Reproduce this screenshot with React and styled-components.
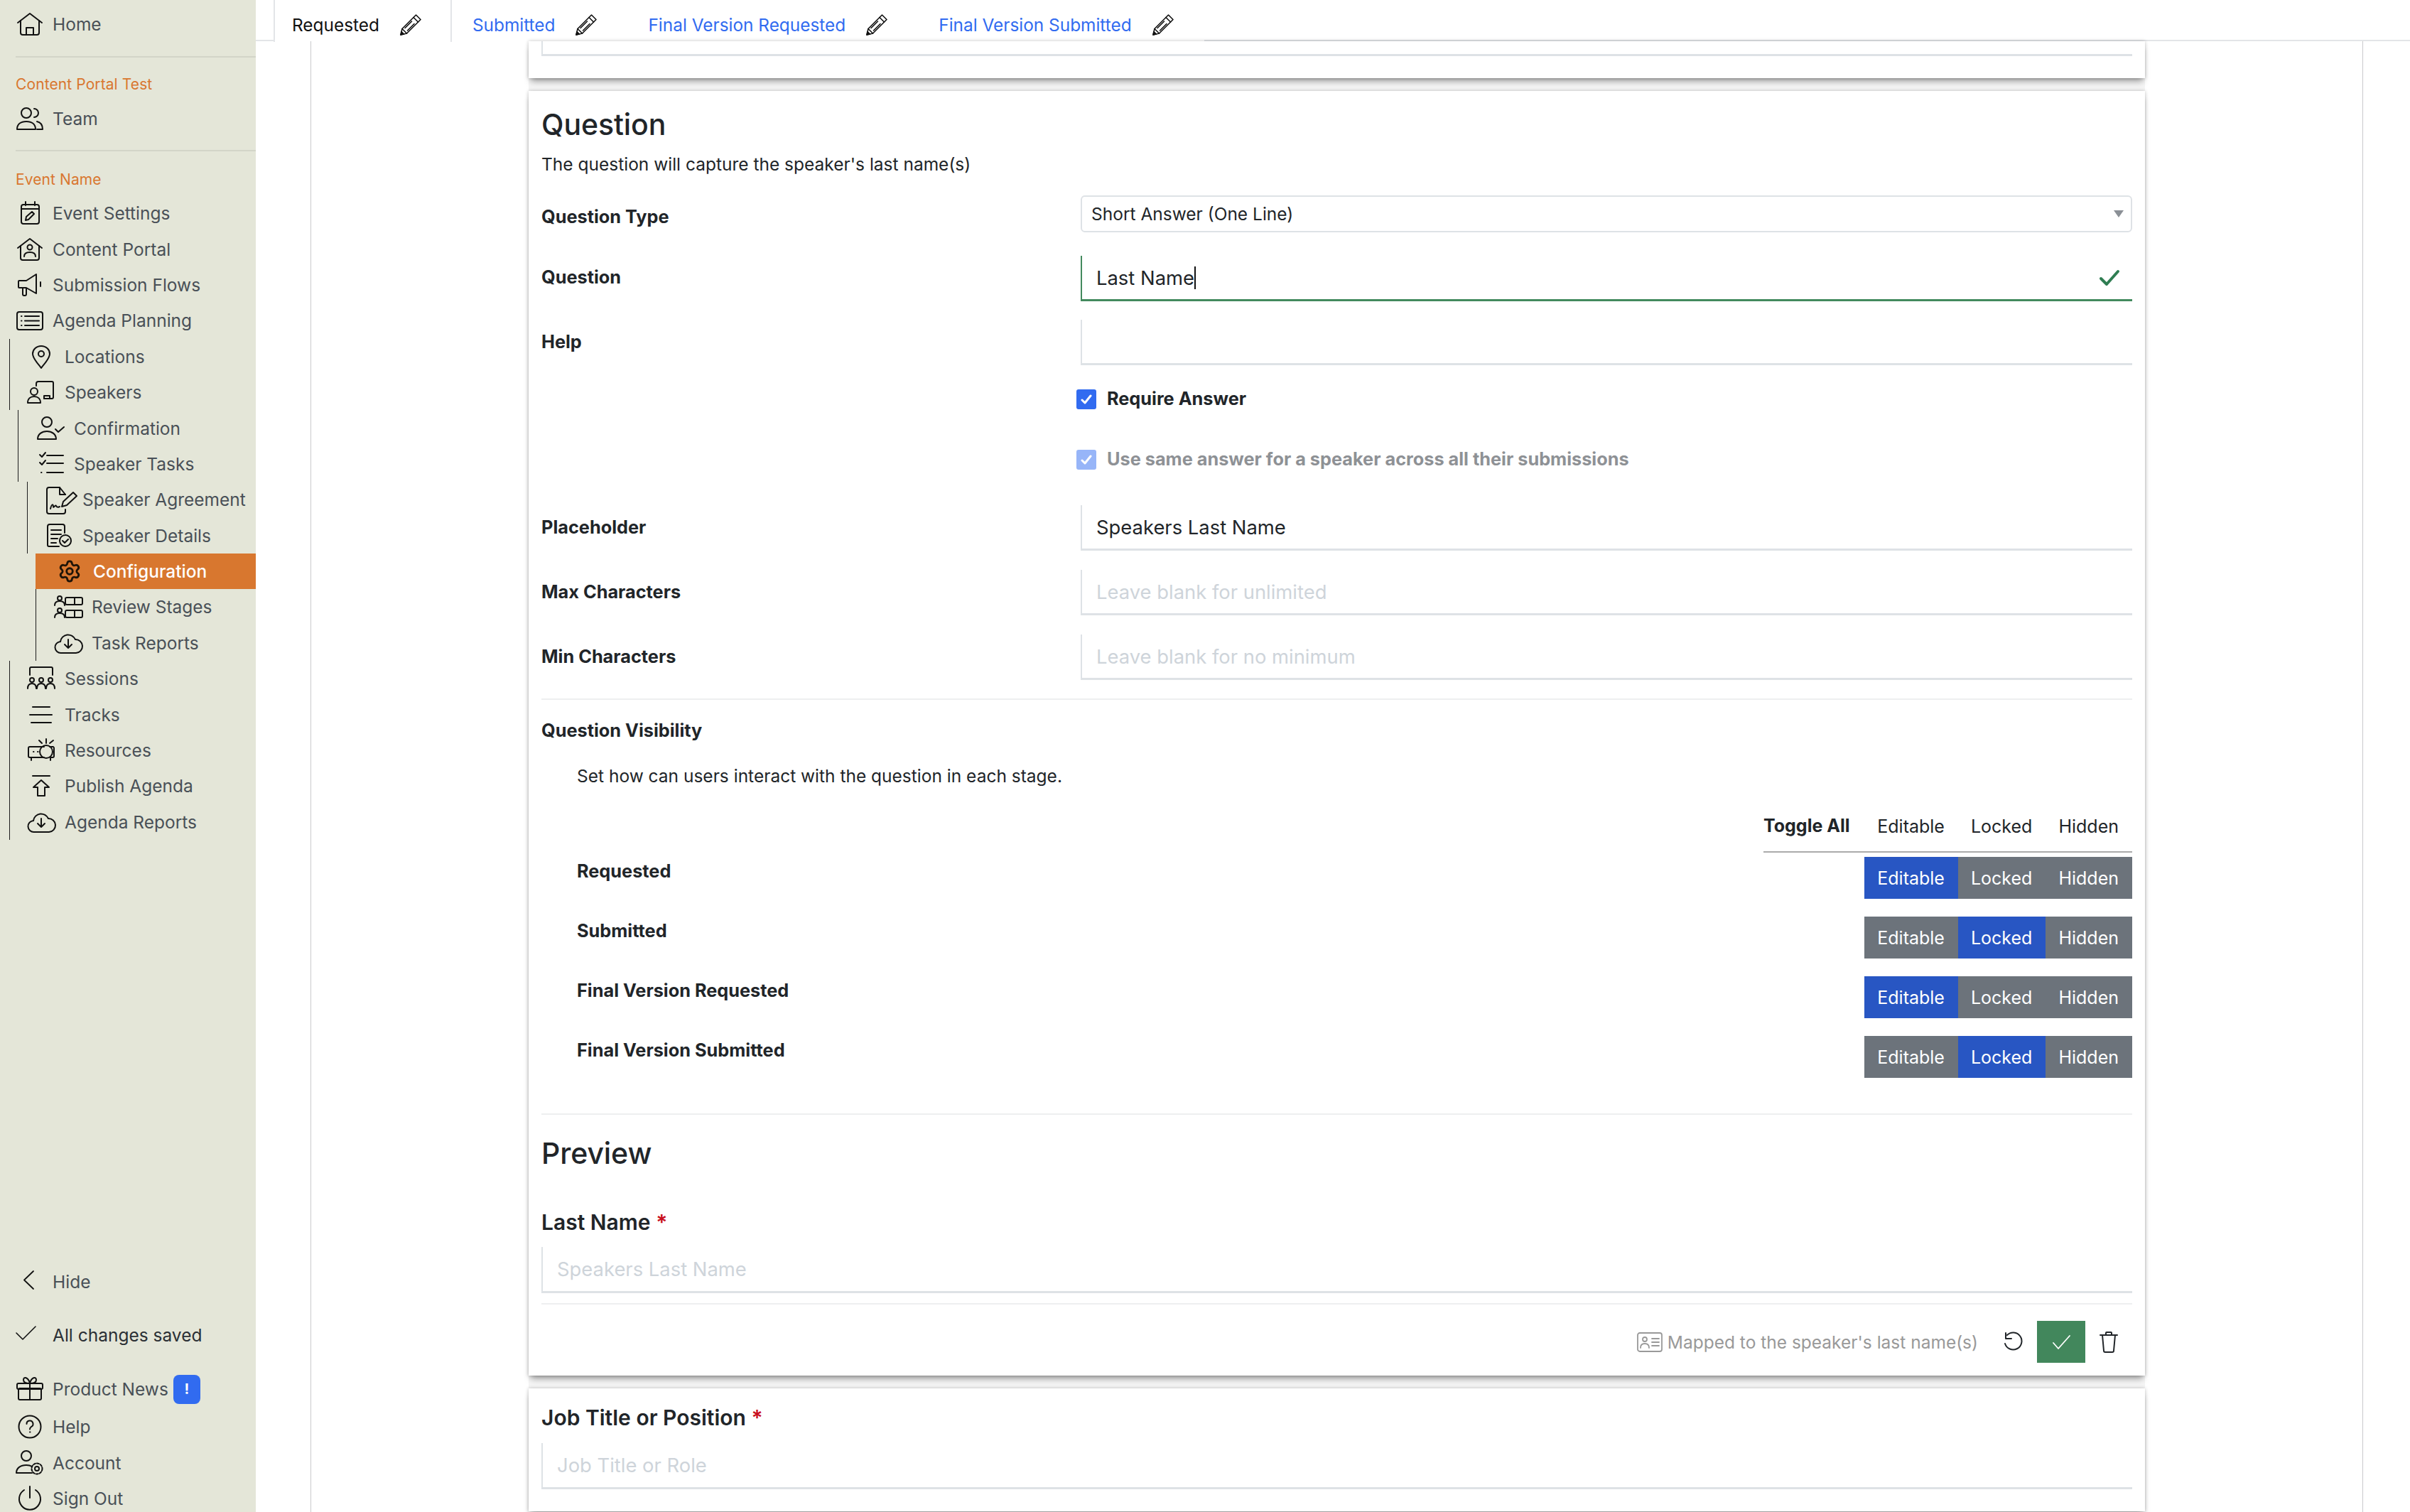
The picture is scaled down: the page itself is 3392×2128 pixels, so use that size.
import React from "react";
import styled, { createGlobalStyle } from "styled-components";
import { Settings } from "lucide-react";

const GlobalStyle = createGlobalStyle`
  * { box-sizing: border-box; }
  html, body { margin: 0; padding: 0; background: #fff; }
  body { font-family: Inter, "Liberation Sans", sans-serif; color: #212529; }
`;

const Page = styled.div`
  display: flex;
  width: 3392px;
  height: 2128px;
  overflow: hidden;
`;

/* sidebar */
const Sidebar = styled.aside`
  width: 360px;
  flex: none;
  background: #e4e6d8;
  display: flex;
  flex-direction: column;
  justify-content: space-between;
  padding-top: 9px;
`;

const Divider = styled.div`
  height: 2px;
  margin: ${(p) => p.$m};
  background: #d3d5c8;
`;

const SectionLabel = styled.div`
  font-size: 21px;
  line-height: 26px;
  color: #d9772f;
  padding-left: 22px;
  margin-bottom: ${(p) => p.$mb}px;
  letter-spacing: 0.1px;
`;

const NavRow = styled.div`
  display: flex;
  align-items: center;
  height: ${(p) => p.$h || 50.4}px;
  padding-left: ${(p) => p.$pad}px;
  gap: 12px;
  font-size: 24.5px;
  color: ${(p) => (p.$active ? "#fff" : p.$dark ? "#2b3035" : "#495057")};
  font-weight: ${(p) => (p.$active ? 500 : 400)};
  background: ${(p) => (p.$active ? "#d8772f" : "transparent")};
  white-space: nowrap;
`;

const Segment = styled.div`
  margin-left: ${(p) => p.$left}px;
  border-left: ${(p) => (p.$flat ? "none" : "1.5px solid #1d1d1d")};

  ${NavRow} {
    gap: 13px;
  }
`;

const IconBox = styled.span`
  width: 40px;
  height: 36px;
  flex: none;
  display: flex;
  align-items: center;
  justify-content: center;
  color: ${(p) => (p.$active ? "#1f1408" : "#111")};
`;

const Glyph = styled.svg`
  width: ${(p) => p.$w || 40}px;
  height: ${(p) => p.$h || 36}px;
  flex: none;
  overflow: visible;
  fill: none;
  stroke: currentColor;
  stroke-width: ${(p) => p.$sw || 2};
  stroke-linecap: round;
  stroke-linejoin: round;
`;

const NewsBadge = styled.span`
  width: 38px;
  height: 41px;
  border-radius: 8px;
  background: #316bf0;
  color: #fff;
  font-size: 20px;
  font-weight: 700;
  display: flex;
  align-items: center;
  justify-content: center;
  margin-left: -5px;
`;

const BottomNav = styled.div`
  display: flex;
  flex-direction: column;
  margin-bottom: -6px;
`;

const icons = {
  home: <><path d="M3 16 20 3l17 13" /><path d="M7 13v17a3 3 0 0 0 3 3h20a3 3 0 0 0 3-3V13" /><path d="M15 33V23h10v10" /></>,
  team: <><circle cx="15" cy="10" r="7" /><path d="M26 4a6 6 0 0 1 0 12" /><path d="M2 33c0-7 5-11 13-11s13 4 13 11z" /><path d="M30 22c5 1 8 5 8 11h-8" /></>,
  calendar: <><rect x="8" y="6" width="25" height="27" rx="3" /><path d="M14 2v5M27 2v5M8 12h25" /><path d="M14 28l1-5 8-7 3 3-8 8z" /></>,
  portal: <><path d="M3 16 20 3l17 13" /><path d="M7 13v17a3 3 0 0 0 3 3h20a3 3 0 0 0 3-3V13" /><circle cx="20" cy="15" r="3.500" /><path d="M12 28c0-4 3-6 8-6s8 2 8 6" /></>,
  megaphone: <><path d="M5 12h10l14-9v27l-14-8H5a1 1 0 0 1-1-1v-8a1 1 0 0 1 1-1z" /><path d="M10 23v8a2 2 0 0 0 2 2h1a2 2 0 0 0 2-2v-8" /><path d="M35 14v6" /></>,
  agenda: <><rect x="2" y="6" width="36" height="25" rx="3" /><path d="M13 12h20M13 18.500h20M13 25h20M8 12h.5M8 18.500h.5M8 25h.5" /></>,
  pin: <><path d="M20 3c-7 0-12 5-12 11 0 7 8 14 12 20 4-6 12-13 12-20 0-6-5-11-12-11z" /><circle cx="20" cy="14" r="4" /></>,
  speakers: <><path d="M13 9V6a3 3 0 0 1 3-3h19a2 2 0 0 1 2 2v20a2 2 0 0 1-2 2H24" /><path d="M24 27v-4h8v4" /><circle cx="10" cy="17" r="5" /><path d="M1 33c0-6 4-9 9-9s9 3 9 9z" /></>,
  confirm: <><circle cx="15" cy="9" r="7" /><path d="M2 33c0-7 6-11 13-11s13 4 13 11z" /><path d="M27 19l4 4 8-7" /></>,
  tasks: <><path d="M15 6h23M15 17h23M15 30h23" /><path d="M5 5l3 3 5-6M5 16l3 3 5-6M7 30h.5" /></>,
  agreement: <><path d="M29 11 21 1H6a3 3 0 0 0-3 3v31a3 3 0 0 0 3 3h20a3 3 0 0 0 3-3v-3" /><path d="M21 1v10h8" /><path d="M8 31c2-8 4-6 4-3s3-3 4-1 3 2 5 1" /><path d="M24 28l2-7 14-13 5 5-14 13z" /></>,
  details: <><path d="M28 14V5a3 3 0 0 0-3-3H7a3 3 0 0 0-3 3v26a2 2 0 0 0 2 2h14" /><path d="M9 10h14M9 16h14M9 22h9M9 28h7" /><circle cx="29" cy="25" r="8" /><path d="M25 25l3 3 5-5" /></>,
  stages: <><circle cx="8" cy="6" r="3" /><path d="M1 16c0-4 3-6 7-6s7 2 7 6" /><circle cx="8" cy="23" r="3" /><path d="M1 33c0-4 3-6 7-6s7 2 7 6" /><rect x="16" y="5" width="24" height="10" rx="2" /><path d="M29 5v10" /><rect x="16" y="23" width="24" height="10" rx="2" /><path d="M29 23v10" /></>,
  cloud: <><path d="M10 32a8 8 0 0 1-1-16A11 11 0 0 1 30 13a9.500 9.500 0 0 1 1 19z" /><path d="M20 13v12m-5-5 5 5 5-5" /></>,
  sessions: <><path d="M4 13V4a2 2 0 0 1 2-2h28a2 2 0 0 1 2 2v9" /><circle cx="7" cy="20" r="3" /><circle cx="20" cy="20" r="3" /><circle cx="33" cy="20" r="3" /><path d="M1 32c0-4 2-7 6-7s6 3 6 7M14 32c0-4 2-7 6-7s6 3 6 7M27 32c0-4 2-7 6-7s6 3 6 7" /></>,
  tracks: <><path d="M8 7h24M4 18h31M6 29h28" /></>,
  resources: <><path d="M24 13H4a2 2 0 0 0-2 2v11a2 2 0 0 0 2 2h20M32 13h5a2 2 0 0 1 1 2v11a2 2 0 0 1-2 2h-3" /><circle cx="27" cy="20" r="9" /><path d="M6 29v3M33 29v3M27 2v6M17 4l4 4M37 4l-5 4M9 20h.5M15 20h.5" /></>,
  publish: <><path d="M8 4h24" /><path d="M20 10 9 20h6v12h10V20h6z" /></>,
  back: <path d="M25 3 12 15.500 25 28" />,
  saved: <path d="M1 15l9 9L28 6" />,
  gift: <><rect x="4" y="17" width="32" height="16" rx="2" /><rect x="2" y="10" width="36" height="8" rx="2" /><path d="M20 10v23" /><path d="M20 10c-4 0-9-1-9-5 0-5 7-4 9 5zM20 10c4 0 9-1 9-5 0-5-7-4-9 5z" /></>,
  help: <><circle cx="20" cy="18" r="15.500" /><path d="M15.500 14a4.500 4.500 0 1 1 6.500 4c-1.500 1-2 1.500-2 3.500M20 25.500h.5" /></>,
  account: <><circle cx="15" cy="8" r="7" /><path d="M1 32c0-7 6-11 14-11 3 0 5 0 8 2M1 32h22" /><circle cx="30" cy="26" r="3" /><circle cx="30" cy="26" r="7.500" strokeDasharray="3 2" /></>,
  power: <><path d="M12 6a15 15 0 1 0 16 0" /><path d="M20 1v16" /></>,
};

const NavIcon = ({ name, active, sw }) => (
  <IconBox $active={active}>
    {name === "gear" ? (
      <Settings size={34} strokeWidth={2} />
    ) : (
      <Glyph viewBox="0 0 40 36" $sw={sw}>{icons[name]}</Glyph>
    )}
  </IconBox>
);

const Item = ({ icon, label, pad, active, sw, h, dark, children }) => (
  <NavRow $pad={pad} $active={active} $h={h} $dark={dark}>
    <NavIcon name={icon} active={active} sw={sw} />
    <span>{label}</span>
    {children}
  </NavRow>
);

/* tab strip */
const Content = styled.main`
  flex: 1;
  min-width: 0;
  display: flex;
  flex-direction: column;
`;

const TabBar = styled.div`
  display: flex;
  align-items: flex-start;
  height: 58px;
  flex: none;
  padding-left: 25px;
  border-bottom: 2px solid #e3e5e8;
`;

const Tab = styled.div`
  display: flex;
  align-items: center;
  gap: 28px;
  height: 59px;
  padding: 21px 40px 10px ${(p) => (p.$active ? 24 : 27)}px;
  font-size: 24.4px;
  white-space: nowrap;
  color: ${(p) => (p.$active ? "#111" : "#316bf0")};
  background: #fff;
  border-left: 2px solid ${(p) => (p.$active ? "#e3e5e8" : "transparent")};
  border-right: 2px solid ${(p) => (p.$active ? "#e3e5e8" : "transparent")};
`;

const PencilMark = styled(Glyph)`
  color: #111;
`;

const Pencil = () => (
  <PencilMark viewBox="0 0 32 32" $w={32} $h={32} $sw={1.6}>
    <path d="M23.500 2 30 8.500 10.500 28 2 30l2-8.500z" />
    <path d="M20 5.500 26.500 12M4 21.500l6.500 6.500M17.500 11 8 20.500M21 14.500 11.500 24" />
    <path d="M2 30l1-4.500L6.500 29z" fill="#111" />
  </PencilMark>
);

/* page column + cards */
const Scroller = styled.div`
  flex: 1;
  min-height: 0;
  padding-left: 77px;
`;

const Column = styled.div`
  width: 2889px;
  height: 100%;
  padding: 0 306px;
  border-left: 1.5px solid #c9cacc;
  border-right: 1.5px solid #c9cacc;
  display: flex;
  flex-direction: column;
`;

const Card = styled.section`
  position: relative;
  flex: none;
  background: #fff;
  padding: ${(p) => p.$pad || "0 18px"};
  height: ${(p) => (p.$h ? `${p.$h}px` : "auto")};
  box-shadow: 0 7px 9px -3px rgba(0, 0, 0, 0.38), 0 0 5px rgba(0, 0, 0, 0.24);
`;

const CardGap = styled.div`
  height: 18px;
  flex: none;
  background: #f5f5f5;
`;

const StubField = styled.div`
  height: 21px;
  border-left: 2px solid #dee2e6;
  border-bottom: 3px solid #dee2e6;
`;

const PageTitle = styled.h2`
  margin: ${(p) => p.$m || 0};
  font-size: 41px;
  line-height: 50px;
  font-weight: 500;
  letter-spacing: -0.1px;
`;

const Lead = styled.p`
  margin: 13px 0 0;
  font-size: 24.5px;
  line-height: 36px;
`;

const FormRow = styled.div`
  display: grid;
  grid-template-columns: 759px 1fr;
  margin-top: ${(p) => p.$mt}px;
  align-items: center;
`;

const FieldLabel = styled.label`
  font-size: 25.3px;
  line-height: 36px;
  font-weight: 700;
  color: #212529;
  transform: translateY(${(p) => p.$dy || 0}px);
`;

const SelectBox = styled.div`
  height: 52px;
  display: flex;
  align-items: center;
  justify-content: space-between;
  padding: 0 13px;
  font-size: 24.5px;
  border: 2px solid #dee2e6;
  border-radius: 6px;
`;

const Caret = styled.span`
  width: 0;
  height: 0;
  margin-right: -3px;
  border-left: 7px solid transparent;
  border-right: 7px solid transparent;
  border-top: 10px solid #8b9096;
`;

const TextInput = styled.input`
  display: block;
  width: 100%;
  height: ${(p) => p.$h || 64}px;
  padding: 0 0 0 20px;
  font-family: inherit;
  font-size: 27.4px;
  color: #212529;
  background: #fff;
  border: none;
  border-left: 2px solid #dee2e6;
  border-bottom: 3px solid #dee2e6;
  outline: none;
  &::placeholder { color: #ced4da; opacity: 1; }
`;

const FocusField = styled.div`
  position: relative;
  height: 64px;
  display: flex;
  align-items: center;
  padding-left: 20px;
  font-size: 27.4px;
  border-left: 2px solid #438a5e;
  border-bottom: 3px solid #438a5e;
`;

const TextCaret = styled.span`
  display: inline-block;
  width: 2px;
  height: 32px;
  background: #111;
`;

const ValidMark = styled.span`
  position: absolute;
  right: 17px;
  top: 16px;
  color: #2f7d52;
  display: flex;
`;

const CheckRow = styled.div`
  display: flex;
  align-items: center;
  gap: 15px;
  margin-left: -6px;
  font-size: 25.3px;
  line-height: 28px;
  font-weight: 700;
  color: ${(p) => (p.$off ? "#8e9195" : "#212529")};
`;

const CheckText = styled.span`
  margin-top: -2px;
`;

const CheckBox = styled.span`
  width: 28px;
  height: 28px;
  border-radius: 3px;
  background: ${(p) => (p.$off ? "#97b5f8" : "#316bf0")};
  color: #fff;
  display: flex;
  align-items: center;
  justify-content: center;
`;

const Rule = styled.hr`
  margin: ${(p) => p.$mt}px 0 0;
  border: none;
  height: 2px;
  background: #eeeff0;
`;

const BlockLabel = styled.div`
  margin-top: ${(p) => p.$mt}px;
  padding-left: ${(p) => p.$pl || 0}px;
  font-size: 25.3px;
  line-height: 36px;
  font-weight: 700;
`;

const HelpLine = styled(BlockLabel)`
  font-size: 24.5px;
  font-weight: 400;
`;

const FieldTitle = styled(BlockLabel)`
  font-size: 30px;
  line-height: 40px;
  font-weight: 600;
`;

const Required = styled.span`
  color: #c9101f;
`;

const VisHead = styled.div`
  width: 519px;
  height: 72px;
  margin: 18px 0 0 auto;
  display: flex;
  align-items: center;
  justify-content: space-between;
  border-bottom: 2px solid #aaa;
`;

const ToggleAll = styled.span`
  font-size: 25px;
  font-weight: 700;
  transform: translateY(-1px);
`;

const Seg = styled.button`
  height: ${(p) => (p.$plain ? "auto" : "59px")};
  padding: 0 19px 0 18px;
  border: none;
  font-family: inherit;
  font-size: 25px;
  color: ${(p) => (p.$plain ? "#212529" : "#fff")};
  background: ${(p) => (p.$plain ? "transparent" : p.$on ? "#2856c3" : "#6c737b")};
`;

const SegGroup = styled.div`
  display: flex;
`;

const VisRows = styled.div`
  display: flex;
  flex-direction: column;
  gap: 25px;
  margin-top: 6px;
`;

const VisRow = styled.div`
  display: flex;
  justify-content: space-between;
  align-items: flex-start;
  padding-left: 50px;
  font-size: 25.3px;
  line-height: 36px;
  font-weight: 700;
`;

const VisName = styled.span`
  padding-top: 2px;
`;

const Actions = styled.div`
  display: flex;
  align-items: center;
  justify-content: flex-end;
  gap: 20px;
  margin-top: 23px;
  padding-right: 20px;
`;

const MapNote = styled.div`
  display: flex;
  align-items: center;
  gap: 7px;
  margin-right: 15px;
  font-size: 24.5px;
  color: #999;
`;

const SaveButton = styled.button`
  width: 68px;
  height: 59px;
  border: none;
  background: #42875c;
  color: #fff;
  display: flex;
  align-items: center;
  justify-content: center;
`;

const modes = ["Editable", "Locked", "Hidden"];
const stages = [
  ["Requested", "Editable"],
  ["Submitted", "Locked"],
  ["Final Version Requested", "Editable"],
  ["Final Version Submitted", "Locked"],
];

const Tick = () => (
  <Glyph viewBox="0 0 20 20" $w={20} $h={20} $sw={3}><path d="M4 11l4 4 8-10" /></Glyph>
);

const App = () => (
  <Page>
    <GlobalStyle />
    <Sidebar>
      <div>
        <Item icon="home" label="Home" pad={22} />
        <Divider $m="19.600px 0 25px 22px" />
        <SectionLabel $mb={10}>Content Portal Test</SectionLabel>
        <Item icon="team" label="Team" pad={22} />
        <Divider $m="18.600px 0 27px 22px" />
        <SectionLabel $mb={9}>Event Name</SectionLabel>
        <Item icon="calendar" label="Event Settings" pad={22} />
        <Item icon="portal" label="Content Portal" pad={22} />
        <Item icon="megaphone" label="Submission Flows" pad={22} />
        <Item icon="agenda" label="Agenda Planning" pad={22} />
        <Segment $left={13}>
          <Item icon="pin" label="Locations" pad={24} />
          <Item icon="speakers" label="Speakers" pad={24} />
        </Segment>
        <Segment $left={25}>
          <Item icon="confirm" label="Confirmation" pad={25} />
          <Item icon="tasks" label="Speaker Tasks" pad={25} />
        </Segment>
        <Segment $left={38}>
          <Item icon="agreement" label="Speaker Agreement" pad={24} />
          <Item icon="details" label="Speaker Details" pad={24} />
        </Segment>
        <Segment $left={50} $flat>
          <Item icon="gear" label="Configuration" pad={28} active />
        </Segment>
        <Segment $left={50}>
          <Item icon="stages" label="Review Stages" pad={25} />
          <Item icon="cloud" label="Task Reports" pad={25} />
        </Segment>
        <Segment $left={13}>
          <Item icon="sessions" label="Sessions" pad={24} />
          <Item icon="tracks" label="Tracks" pad={24} />
          <Item icon="resources" label="Resources" pad={24} />
          <Item icon="publish" label="Publish Agenda" pad={24} />
          <Item icon="cloud" label="Agenda Reports" pad={24} />
        </Segment>
      </div>
      <BottomNav>
        <Item icon="back" label="Hide" pad={22} sw={1.8} h={52} />
        <Item icon="saved" label="All changes saved" pad={22} sw={1.6} h={98} dark />
        <Item icon="gift" label="Product News" pad={22} h={54}>
          <NewsBadge>!</NewsBadge>
        </Item>
        <Item icon="help" label="Help" pad={22} h={52} />
        <Item icon="account" label="Account" pad={22} h={50} />
        <Item icon="power" label="Sign Out" pad={22} h={50} />
      </BottomNav>
    </Sidebar>

    <Content>
      <TabBar>
        <Tab $active>Requested <Pencil /></Tab>
        <Tab>Submitted <Pencil /></Tab>
        <Tab>Final Version Requested <Pencil /></Tab>
        <Tab>Final Version Submitted <Pencil /></Tab>
      </TabBar>
      <Scroller>
        <Column>
          <Card $h={52}>
            <StubField />
          </Card>
          <CardGap />
          <Card $pad="22px 18px 18px">
            <PageTitle>Question</PageTitle>
            <Lead>The question will capture the speaker's last name(s)</Lead>
            <FormRow $mt={26}>
              <FieldLabel $dy={4}>Question Type</FieldLabel>
              <SelectBox>
                Short Answer (One Line)
                <Caret />
              </SelectBox>
            </FormRow>
            <FormRow $mt={33}>
              <FieldLabel $dy={-2}>Question</FieldLabel>
              <FocusField>
                Last Name<TextCaret />
                <ValidMark>
                  <Glyph viewBox="0 0 30 30" $w={30} $h={30} $sw={4}>
                    <path d="M3 16l8 8L27 6" />
                  </Glyph>
                </ValidMark>
              </FocusField>
            </FormRow>
            <FormRow $mt={26}>
              <FieldLabel $dy={-1}>Help</FieldLabel>
              <TextInput readOnly />
            </FormRow>
            <FormRow $mt={34}>
              <span />
              <CheckRow>
                <CheckBox><Tick /></CheckBox>
                <CheckText>Require Answer</CheckText>
              </CheckRow>
            </FormRow>
            <FormRow $mt={57}>
              <span />
              <CheckRow $off>
                <CheckBox $off><Tick /></CheckBox>
                <CheckText>Use same answer for a speaker across all their submissions</CheckText>
              </CheckRow>
            </FormRow>
            <FormRow $mt={50}>
              <FieldLabel $dy={-1}>Placeholder</FieldLabel>
              <TextInput readOnly value="Speakers Last Name" />
            </FormRow>
            <FormRow $mt={27}>
              <FieldLabel $dy={-1}>Max Characters</FieldLabel>
              <TextInput readOnly placeholder="Leave blank for unlimited" />
            </FormRow>
            <FormRow $mt={27}>
              <FieldLabel $dy={-1}>Min Characters</FieldLabel>
              <TextInput readOnly placeholder="Leave blank for no minimum" />
            </FormRow>
            <Rule $mt={26} />
            <BlockLabel $mt={25}>Question Visibility</BlockLabel>
            <HelpLine $mt={28} $pl={50}>
              Set how can users interact with the question in each stage.
            </HelpLine>
            <VisHead>
              <ToggleAll>Toggle All</ToggleAll>
              <SegGroup>
                {modes.map((m) => (
                  <Seg key={m} $plain>{m}</Seg>
                ))}
              </SegGroup>
            </VisHead>
            <VisRows>
              {stages.map(([name, current]) => (
                <VisRow key={name}>
                  <VisName>{name}</VisName>
                  <SegGroup>
                    {modes.map((m) => (
                      <Seg key={m} $on={m === current}>{m}</Seg>
                    ))}
                  </SegGroup>
                </VisRow>
              ))}
            </VisRows>
            <Rule $mt={50} />
            <PageTitle $m="29px 0 0">Preview</PageTitle>
            <FieldTitle $mt={52}>
              Last Name <Required>*</Required>
            </FieldTitle>
            <BlockLabel $mt={15}>
              <TextInput readOnly $h={65} placeholder="Speakers Last Name" />
            </BlockLabel>
            <Rule $mt={14} />
            <Actions>
              <MapNote>
                <Glyph viewBox="0 0 36 28" $w={36} $h={28} $sw={1.8}>
                  <rect x="1" y="1" width="34" height="26" rx="3" />
                  <circle cx="11" cy="10" r="3" />
                  <path d="M5 22c0-4 2-6 6-6s6 2 6 6M21 9h10M21 14h10M21 19h10" />
                </Glyph>
                Mapped to the speaker's last name(s)
              </MapNote>
              <Glyph viewBox="0 0 28 30" $w={28} $h={30} $sw={2}>
                <path d="M6 5a12 12 0 1 1-3 12" />
                <path d="M4 2v8h8" />
              </Glyph>
              <SaveButton>
                <Glyph viewBox="0 0 30 30" $w={30} $h={30} $sw={1.8}><path d="M4 16l7 8L27 6" /></Glyph>
              </SaveButton>
              <Glyph viewBox="0 0 26 32" $w={26} $h={32} $sw={2}>
                <path d="M1 6h24M4 6l2 22a2 2 0 0 0 2 2h10a2 2 0 0 0 2-2l2-22M9 6V3a1 1 0 0 1 1-1h6a1 1 0 0 1 1 1v3" />
              </Glyph>
            </Actions>
          </Card>
          <CardGap />
          <Card $pad="21px 18px 31px">
            <FieldTitle $mt={0}>
              Job Title or Position <Required>*</Required>
            </FieldTitle>
            <BlockLabel $mt={16}>
              <TextInput readOnly $h={65} placeholder="Job Title or Role" />
            </BlockLabel>
          </Card>
        </Column>
      </Scroller>
    </Content>
  </Page>
);

export default App;
